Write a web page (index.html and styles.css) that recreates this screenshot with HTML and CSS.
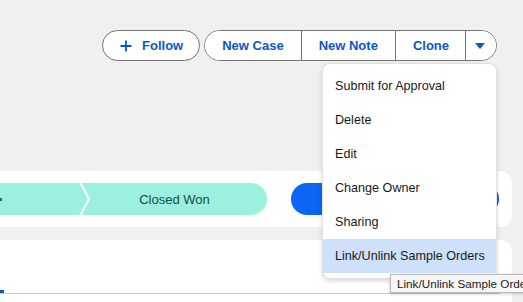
FILE: index.html
```html
<!DOCTYPE html>
<html>
<head>
<meta charset="utf-8">
<link rel="stylesheet" href="styles.css">
</head>
<body>
<div class="page">
  <header class="header">
    <div class="actions">
      <button class="btn follow">
        <svg class="plus" width="12" height="12" viewBox="0 0 12 12"><path d="M6 0.5V11.5M0.5 6H11.5" stroke="#0b55cb" stroke-width="1.8" fill="none"/></svg>
        <span>Follow</span>
      </button>
      <div class="group-wrap">
        <div class="group">
          <button class="gbtn">New Case</button>
          <button class="gbtn">New Note</button>
          <button class="gbtn clone">Clone</button>
          <button class="gbtn more">
            <svg width="10" height="6" viewBox="0 0 10 6"><path d="M0 0H10L5 6Z" fill="#0b55cb"/></svg>
          </button>
        </div>
        <ul class="menu">
          <li class="item">Submit for Approval</li>
          <li class="item">Delete</li>
          <li class="item">Edit</li>
          <li class="item">Change Owner</li>
          <li class="item">Sharing</li>
          <li class="item active">Link/Unlink Sample Orders</li>
        </ul>
      </div>
    </div>
  </header>
  <section class="path-panel">
    <div class="path">
      <div class="stage prev"><span class="mark"></span></div>
      <svg class="chev" width="14" height="32" viewBox="0 0 14 32"><path d="M2 -1L11 16L2 33" stroke="#ffffff" stroke-width="2" fill="none"/></svg>
      <div class="stage current">Closed Won</div>
    </div>
    <div class="complete"></div>
  </section>
  <section class="detail-panel">
    <div class="tabs"><span class="tab-active"></span></div>
  </section>
  <div class="tooltip">Link/Unlink Sample Orders</div>
</div>
</body>
</html>
```

FILE: styles.css
```css
* { box-sizing: border-box; }
html, body { margin: 0; padding: 0; }
body {
  background: #f0f0f0;
  font-family: "Liberation Sans", Arial, sans-serif;
  width: 523px;
  height: 302px;
  overflow: hidden;
}
.page { position: relative; width: 523px; height: 302px; overflow: hidden; }
.header { height: 171px; padding-top: 30px; }
.actions {
  display: flex;
  justify-content: flex-end;
  align-items: flex-start;
  gap: 4px;
  padding-right: 26px;
}
.btn, .gbtn {
  font-family: "Liberation Sans", Arial, sans-serif;
  font-weight: bold;
  font-size: 13px;
  color: #0b55cb;
  background: #fff;
  height: 31px;
  margin: 0;
  cursor: pointer;
}
.follow {
  display: flex;
  align-items: center;
  gap: 10px;
  border: 1px solid #747474;
  border-radius: 16px;
  padding: 0 16px 0 17px;
}
.plus { display: block; }
.group-wrap { position: relative; }
.group {
  display: flex;
  border: 1px solid #747474;
  border-radius: 16px;
  overflow: hidden;
  background: #fff;
}
.gbtn {
  border: none;
  border-left: 1px solid #747474;
  height: 29px;
  padding: 0 17px;
}
.gbtn:first-child { border-left: none; }
.gbtn.clone { padding: 0 16px 0 17px; }
.gbtn.more {
  width: 31px;
  display: flex;
  align-items: center;
  justify-content: center;
  padding: 0 2px 0 0;
}
.gbtn.more svg { display: block; }
.menu {
  position: absolute;
  right: 0;
  top: 33px;
  width: 175px;
  margin: 0;
  padding: 5px 0;
  list-style: none;
  background: #fff;
  border: 1px solid #e2e2e2;
  border-radius: 8px;
  box-shadow: 0 2px 4px rgba(0,0,0,0.16);
  z-index: 5;
}
.item {
  height: 34px;
  line-height: 34px;
  padding-left: 12px;
  font-size: 12.6px;
  color: #181818;
  white-space: nowrap;
}
.item.active { background: #cfe1fa; }
.path-panel {
  width: 512px;
  height: 56px;
  background: #fff;
  border-radius: 0 12px 12px 0;
  padding: 12px 13px 0 0;
  display: flex;
  gap: 24px;
}
.path {
  width: 267px;
  height: 32px;
  display: flex;
  background: #9bf0df;
  border-radius: 0 16px 16px 0;
}
.stage {
  height: 32px;
  display: flex;
  align-items: center;
  font-size: 13px;
  color: #0e4f46;
}
.stage.prev { width: 78px; }
.mark { display: block; width: 2px; height: 3px; background: #2c6d63; margin-top: 1px; }
.chev { display: block; flex: none; }
.stage.current { flex: 1; justify-content: center; padding-right: 10px; }
.complete {
  flex: 1;
  height: 32px;
  background: #0b65f5;
  border-radius: 16px;
}
.detail-panel {
  margin-top: 13px;
  width: 512px;
  height: 62px;
  background: #fff;
  border-radius: 0 12px 0 0;
  padding: 50px 12px 0 0;
}
.tabs {
  height: 4px;
  border-bottom: 1px solid #c9c9c9;
}
.tab-active { display: block; width: 4px; height: 3px; background: #0b55cb; }
.tooltip {
  position: absolute;
  left: 390px;
  top: 274px;
  height: 19px;
  padding: 0 6px;
  line-height: 17px;
  font-size: 11.7px;
  color: #222;
  background: #f6f6f6;
  border: 1px solid #b8b8b8;
  box-shadow: 0 1px 3px rgba(0,0,0,0.2);
  white-space: nowrap;
  z-index: 6;
}
```
